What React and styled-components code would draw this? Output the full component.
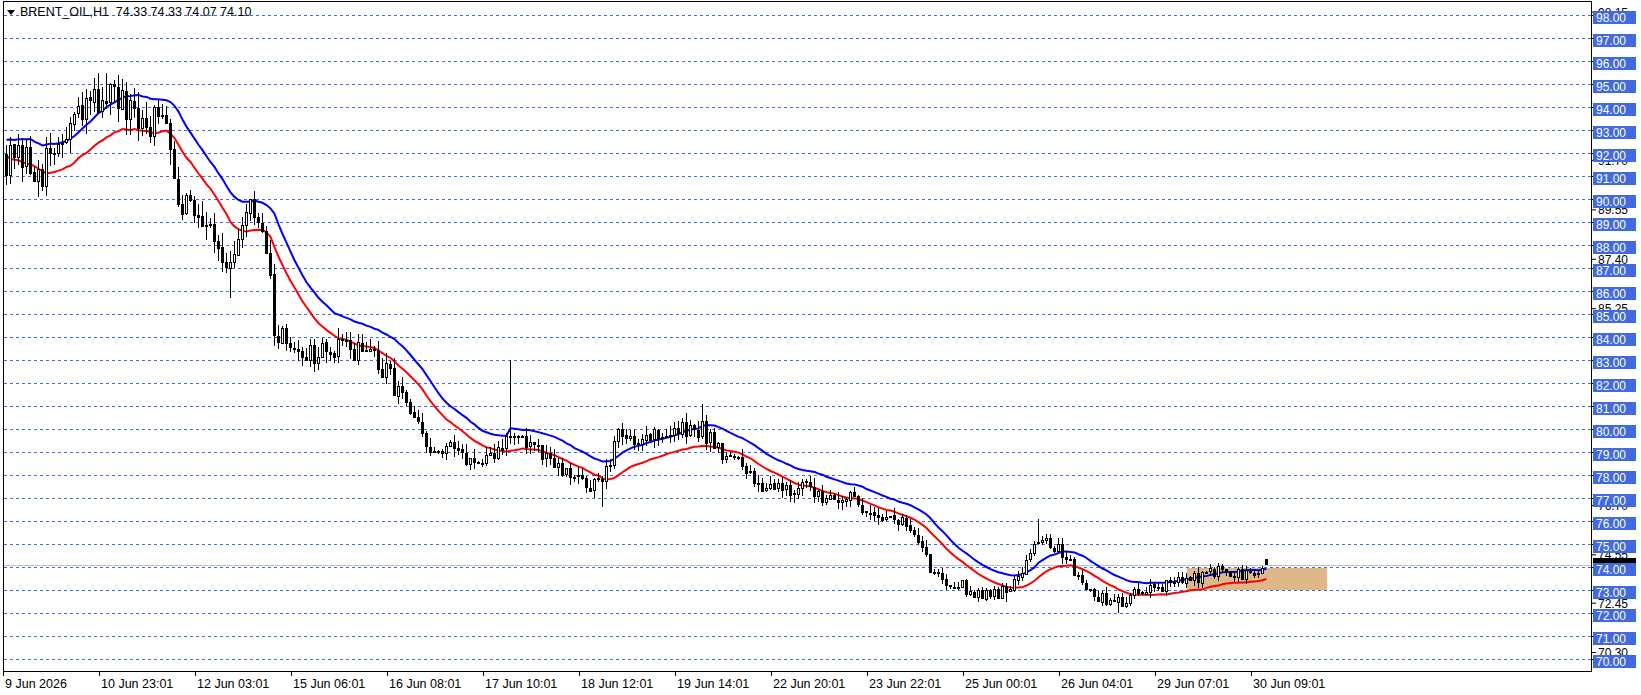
import React, { useMemo } from "react";
import styled, { createGlobalStyle } from "styled-components";

const Global = createGlobalStyle`
  html, body { margin: 0; padding: 0; background: #fff; overflow: hidden; }
  body { font-family: "Liberation Sans", Arial, sans-serif; }
`;

const Page = styled.div`
  width: 1641px;
  height: 695px;
  display: grid;
  grid-template-columns: 1592px 49px;
  grid-template-rows: 672px 23px;
  background: #fff;
`;

const PlotFrame = styled.div`
  margin: 1px 0 0 3px;
  border: 1px solid #000;
  position: relative;
  overflow: hidden;
`;

const Title = styled.div`
  position: absolute;
  left: 3px;
  top: 3px;
  font-size: 12.5px;
  color: #000;
  white-space: pre;
  display: flex;
  align-items: center;
  gap: 5px;
  z-index: 2;
`;

const Tri = styled.span`
  width: 0; height: 0;
  border-left: 4px solid transparent;
  border-right: 4px solid transparent;
  border-top: 5px solid #000;
`;

const Svg = styled.svg`
  display: block;
  width: 100%;
  height: 100%;
  font-family: "Liberation Sans", Arial, sans-serif;
`;

const AxisCell = styled.div`
  overflow: hidden;
`;

const TimeRow = styled.div`
  grid-column: 1 / span 2;
  overflow: hidden;
`;

const Y = (p) => 15 + (98 - p) * 23;

function rng(seed) {
  let s = seed;
  return () => {
    s = (s * 1664525 + 1013904223) % 4294967296;
    return s / 4294967296;
  };
}

const KP = [
  [5, 91.8], [40, 91.3], [70, 93.2], [100, 94.8], [130, 93.2], [160, 93.6],
  [170, 90.2], [200, 89.1], [220, 86.8], [240, 89.6], [258, 87.1], [262, 84.1],
  [300, 83.2], [345, 83.6], [380, 81.8], [410, 78.9], [440, 79.1], [460, 78.2],
  [490, 79.9], [520, 78.7], [545, 77.8], [575, 77.6], [590, 79.6], [630, 79.8],
  [670, 80.0], [690, 79.1], [720, 77.8], [760, 77.4], [800, 77.1], [840, 76.35],
  [870, 75.7], [890, 73.8], [930, 72.9], [960, 72.9], [995, 75.4], [1020, 74.3],
  [1045, 72.7], [1070, 72.5], [1090, 73.1], [1130, 73.35], [1160, 73.8],
  [1200, 73.6], [1210, 74.1],
].map(([ox, p]) => [(ox * 1.047 - 6) / 4, p]);

const N = 316;

function interp(i) {
  for (let k = 0; k < KP.length - 1; k++) {
    const [a, pa] = KP[k], [b, pb] = KP[k + 1];
    if (i <= b) {
      const t = Math.max(0, (i - a) / (b - a));
      return pa + (pb - pa) * Math.min(1, t);
    }
  }
  return KP[KP.length - 1][1];
}

function makeData() {
  const r = rng(12345);
  const bars = [];
  let prev = 92.0;
  for (let i = 0; i < N; i++) {
    const base = interp(i);
    const vol = 0.2 + 0.45 * Math.max(0, (base - 72) / 23);
    let c = base + (r() - 0.5) * vol * 2.6;
    if (i === N - 1) c = 74.1;
    let o = prev + (r() - 0.5) * 0.06;
    if (i === N - 1) o = 74.33;
    let h = Math.max(o, c) + r() * vol * 1.2;
    let l = Math.min(o, c) - r() * vol * 1.2;
    if (i === N - 1) { h = 74.33; l = 74.07; }
    bars.push({ o, h, l, c });
    prev = c;
  }
  const bump = (ox, hi, lo) => {
    const i = Math.round((ox * 1.047 - 6) / 4);
    if (bars[i]) { if (hi) bars[i].h = hi; if (lo) bars[i].l = lo; }
  };
  bump(103, 95.5); bump(237, 90.0); bump(488, 83.0); bump(671, 81.1);
  bump(218, null, 85.7); bump(575, null, 76.6); bump(993, 76.1); bump(1068, null, 72.0);
  bump(960, null, 72.5);
  const ema = (arr, n, init) => {
    const k = 2 / (n + 1);
    let e = init;
    return arr.map((v) => (e = e + k * (v - e)));
  };
  const blue = ema(bars.map((b) => b.h), 20, 92.6);
  const red = ema(bars.map((b) => b.l), 20, 92.0);
  return { bars, blue, red };
}

const X = (i) => 6.5 + 4 * i;

const gridPrices = Array.from({ length: 29 }, (_, k) => 70 + k);
const smallLabels = [98.15, 91.7, 89.55, 87.4, 85.25, 76.7, 74.55, 72.45, 70.3];
const timeLabels = [
  "9 Jun 2026", "10 Jun 23:01", "12 Jun 03:01", "15 Jun 06:01", "16 Jun 08:01",
  "17 Jun 10:01", "18 Jun 12:01", "19 Jun 14:01", "22 Jun 20:01", "23 Jun 22:01",
  "25 Jun 00:01", "26 Jun 04:01", "29 Jun 07:01", "30 Jun 09:01",
];

export default function App() {
  const { bars, blue, red } = useMemo(makeData, []);
  const line = (arr) => arr.map((v, i) => `${i ? "L" : "M"}${X(i)},${Y(v).toFixed(1)}`).join(" ");
  return (
    <Page>
      <Global />
      <PlotFrame>
        <Title><Tri />BRENT_OIL,H1  74.33 74.33 74.07 74.10</Title>
        <Svg viewBox="4 2 1587 669" preserveAspectRatio="none">
          {gridPrices.map((p) => (
            <line key={p} x1="4" x2="1591" y1={Y(p) + 0.5} y2={Y(p) + 0.5}
              stroke="#4169E1" strokeDasharray="3 3" shapeRendering="crispEdges" />
          ))}
          <rect x="1187" y={Y(74) + 1} width="140" height="22" fill="#DEB887" />
          <line x1="4" x2="1591" y1="565.5" y2="565.5" stroke="#C0C0C0" shapeRendering="crispEdges" />
          <path d={line(blue)} fill="none" stroke="#0000FF" strokeWidth="2" />
          <path d={line(red)} fill="none" stroke="#FF0000" strokeWidth="2" />
          <g shapeRendering="crispEdges">
            {bars.map((b, i) => {
              const x = X(i);
              const top = Y(Math.max(b.o, b.c));
              const bot = Y(Math.min(b.o, b.c));
              const bull = b.c >= b.o;
              return (
                <g key={i}>
                  <line x1={x} x2={x} y1={Y(b.h)} y2={Y(b.l)} stroke="#000" />
                  <rect x={x - 1} y={Math.round(top) + 0.5} width="2" height={Math.max(1, Math.round(bot - top))}
                    fill={bull ? "#fff" : "#000"} stroke="#000" />
                </g>
              );
            })}
          </g>
        </Svg>
      </PlotFrame>
      <AxisCell>
        <Svg viewBox="1592 0 49 672">
          {smallLabels.map((p) => (
            <g key={p}>
              <line x1="1592" x2="1596" y1={Y(p) + 0.5} y2={Y(p) + 0.5} stroke="#000" />
              <text x="1598" y={Y(p) + 5} fontSize="12" fill="#000">{p.toFixed(2)}</text>
            </g>
          ))}
          <rect x="1593" y="558" width="43" height="14" fill="#000" />
          {gridPrices.map((p) => (
            <g key={p}>
              <line x1="1592" x2="1596" y1={Y(p) + 0.5} y2={Y(p) + 0.5} stroke="#000" />
              <rect x="1593" y={Y(p) - 4} width="43" height="13" fill="#4169E1" />
              <text x="1596" y={Y(p) + 7} fontSize="12" fill="#fff">{p.toFixed(2)}</text>
            </g>
          ))}
        </Svg>
      </AxisCell>
      <TimeRow>
        <Svg viewBox="0 672 1641 23">
          {timeLabels.map((t, k) => {
            const x = 3 + 96 * k;
            return (
              <g key={t}>
                <line x1={x + 0.5} x2={x + 0.5} y1="672" y2="676" stroke="#000" />
                <text x={x + 2} y="688" fontSize="12.5" fill="#000">{t}</text>
              </g>
            );
          })}
        </Svg>
      </TimeRow>
    </Page>
  );
}
